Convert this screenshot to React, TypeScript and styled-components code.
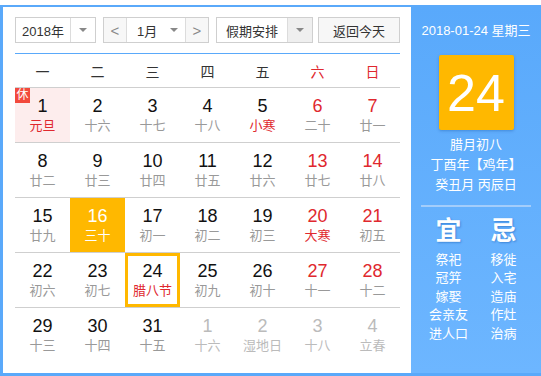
import { Fragment } from "react";
import styled, { createGlobalStyle } from "styled-components";

const GlobalStyle = createGlobalStyle`
  body {
    margin: 0;
    background: #fff;
    font-family: "Liberation Sans", Arial, "Noto Sans CJK SC", sans-serif;
  }
`;

const Frame = styled.div`
  display: flex;
  margin-top: 5px;
  width: 541px;
  height: 371px;
  box-sizing: border-box;
  border: 2px solid #5aa9fa;
  border-left-width: 3px;
  border-right: 0;
  border-bottom-width: 3px;
`;

const Main = styled.div`
  width: 408px;
  box-sizing: border-box;
  padding: 10px 11px 0 12px;
`;

const Toolbar = styled.div`
  display: flex;
  align-items: center;
  height: 26px;
`;

const SelectBox = styled.div<{ w: number; ml?: number }>`
  display: flex;
  width: ${({ w }) => w}px;
  height: 26px;
  margin-left: ${({ ml }) => ml || 0}px;
  box-sizing: border-box;
  border: 1px solid #cfcfcf;
  font-size: 13px;
  color: #333;
`;

const SelectText = styled.div`
  flex: 1;
  display: flex;
  align-items: center;
  justify-content: center;
`;

const Caret = styled.div<{ shaded?: boolean }>`
  width: 24px;
  border-left: 1px solid #dcdcdc;
  background: ${({ shaded }) => (shaded ? "#efefef" : "#fff")};
  display: flex;
  align-items: center;
  justify-content: center;
  &::after {
    content: "";
    border-left: 4px solid transparent;
    border-right: 4px solid transparent;
    border-top: 4px solid #888;
  }
`;

const NavButton = styled.div<{ side: "l" | "r" }>`
  width: 22px;
  display: flex;
  align-items: center;
  justify-content: center;
  background: #f7f7f7;
  color: #888;
  font-size: 15px;
  ${({ side }) => (side === "l" ? "border-right" : "border-left")}: 1px solid #dcdcdc;
`;

const MonthText = styled.div`
  flex: 1;
  display: flex;
  align-items: center;
  padding-left: 10px;
`;

const MonthCaret = styled.div`
  width: 22px;
  display: flex;
  align-items: center;
  justify-content: center;
  &::after {
    content: "";
    border-left: 4px solid transparent;
    border-right: 4px solid transparent;
    border-top: 4px solid #888;
  }
`;

const TodayButton = styled.div`
  margin-left: auto;
  width: 82px;
  height: 26px;
  box-sizing: border-box;
  border: 1px solid #cfcfcf;
  background: #f7f7f7;
  font-size: 13px;
  color: #333;
  display: flex;
  align-items: center;
  justify-content: center;
`;

const Grid = styled.div`
  margin-top: 10px;
  border-top: 1px solid #5aa9fa;
  display: grid;
  grid-template-columns: repeat(7, 55px);
`;

const WeekHead = styled.div<{ weekend?: boolean }>`
  height: 33px;
  display: flex;
  align-items: center;
  justify-content: center;
  font-size: 14px;
  color: ${({ weekend }) => (weekend ? "#e0282e" : "#333")};
  border-bottom: 1px solid #cfcfcf;
`;

const Cell = styled.div<{ bg: string; today?: boolean }>`
  position: relative;
  height: 54px;
  box-sizing: border-box;
  display: flex;
  flex-direction: column;
  align-items: center;
  justify-content: center;
  background: ${({ bg }) => bg};
  ${({ today }) => (today ? "border: 3px solid #ffb800;" : "")}
`;

const RowLine = styled.div`
  grid-column: 1 / -1;
  height: 1px;
  background: #cfcfcf;
`;

const DayNum = styled.div<{ color: string }>`
  font-size: 18px;
  line-height: 22px;
  color: ${({ color }) => color};
`;

const Lunar = styled.div<{ color: string }>`
  font-size: 13px;
  line-height: 18px;
  color: ${({ color }) => color};
`;

const RestBadge = styled.div`
  position: absolute;
  left: 0;
  top: 0;
  width: 15px;
  height: 15px;
  background: #f2493c;
  color: #fff;
  font-size: 12px;
  line-height: 15px;
  text-align: center;
`;

const Side = styled.div`
  flex: 1;
  background: linear-gradient(#59a9fb, #6db6ff);
  color: #fff;
  display: flex;
  flex-direction: column;
  align-items: center;
  padding: 15px 10px 0;
`;

const DateLine = styled.div`
  font-size: 13px;
  line-height: 18px;
`;

const BigDay = styled.div`
  margin-top: 15px;
  width: 75px;
  height: 75px;
  border-radius: 2px;
  background: #ffb800;
  box-shadow: 0 1px 3px rgba(0, 60, 140, 0.3);
  display: flex;
  align-items: center;
  justify-content: center;
  font-size: 52px;
  color: #fff;
`;

const LunarInfo = styled.div`
  margin-top: 5px;
  font-size: 13px;
  line-height: 20px;
  text-align: center;
`;

const Divider = styled.div`
  margin-top: 10px;
  width: 110px;
  height: 2px;
  background: #a3cdfb;
`;

const Columns = styled.div`
  margin-top: 9px;
  display: grid;
  grid-template-columns: 55px 55px;
`;

const Column = styled.div`
  display: flex;
  flex-direction: column;
  align-items: center;
`;

const BigChar = styled.div`
  font-size: 26px;
  line-height: 30px;
  font-weight: bold;
  text-shadow: 1px 1px 2px rgba(0, 70, 160, 0.4);
`;

const ItemList = styled.div`
  margin-top: 5px;
  font-size: 13px;
  line-height: 18.4px;
  text-align: center;
`;

type Day = {
  n: number;
  l: string;
  redNum?: boolean;
  redLunar?: boolean;
  other?: boolean;
  holiday?: boolean;
  selected?: boolean;
  today?: boolean;
};

const rows: Day[][] = [
  [
    { n: 1, l: "元旦", redLunar: true, holiday: true },
    { n: 2, l: "十六" },
    { n: 3, l: "十七" },
    { n: 4, l: "十八" },
    { n: 5, l: "小寒", redLunar: true },
    { n: 6, l: "二十", redNum: true },
    { n: 7, l: "廿一", redNum: true },
  ],
  [
    { n: 8, l: "廿二" },
    { n: 9, l: "廿三" },
    { n: 10, l: "廿四" },
    { n: 11, l: "廿五" },
    { n: 12, l: "廿六" },
    { n: 13, l: "廿七", redNum: true },
    { n: 14, l: "廿八", redNum: true },
  ],
  [
    { n: 15, l: "廿九" },
    { n: 16, l: "三十", selected: true },
    { n: 17, l: "初一" },
    { n: 18, l: "初二" },
    { n: 19, l: "初三" },
    { n: 20, l: "大寒", redNum: true, redLunar: true },
    { n: 21, l: "初五", redNum: true },
  ],
  [
    { n: 22, l: "初六" },
    { n: 23, l: "初七" },
    { n: 24, l: "腊八节", redLunar: true, today: true },
    { n: 25, l: "初九" },
    { n: 26, l: "初十" },
    { n: 27, l: "十一", redNum: true },
    { n: 28, l: "十二", redNum: true },
  ],
  [
    { n: 29, l: "十三" },
    { n: 30, l: "十四" },
    { n: 31, l: "十五" },
    { n: 1, l: "十六", other: true },
    { n: 2, l: "湿地日", other: true },
    { n: 3, l: "十八", other: true },
    { n: 4, l: "立春", other: true },
  ],
];

const weekNames = ["一", "二", "三", "四", "五", "六", "日"];

function DayCell({ d }: { d: Day }) {
  let num = d.redNum ? "#e0282e" : "#111";
  let lunar = d.redLunar ? "#e0282e" : "#999";
  let bg = "transparent";
  if (d.other) {
    num = "#bbb";
    lunar = "#bbb";
  }
  if (d.holiday) bg = "#fdeded";
  if (d.selected) {
    bg = "#ffb800";
    num = "#fff";
    lunar = "#fff";
  }
  return (
    <Cell bg={bg} today={d.today}>
      {d.holiday && <RestBadge>休</RestBadge>}
      <DayNum color={num}>{d.n}</DayNum>
      <Lunar color={lunar}>{d.l}</Lunar>
    </Cell>
  );
}

export default function App() {
  return (
    <>
      <GlobalStyle />
      <Frame>
        <Main>
          <Toolbar>
            <SelectBox w={81}>
              <SelectText>2018年</SelectText>
              <Caret />
            </SelectBox>
            <SelectBox w={106} ml={7}>
              <NavButton side="l">&lt;</NavButton>
              <MonthText>1月</MonthText>
              <MonthCaret />
              <NavButton side="r">&gt;</NavButton>
            </SelectBox>
            <SelectBox w={97} ml={7}>
              <SelectText>假期安排</SelectText>
              <Caret shaded />
            </SelectBox>
            <TodayButton>返回今天</TodayButton>
          </Toolbar>
          <Grid>
            {weekNames.map((w, i) => (
              <WeekHead key={w} weekend={i >= 5}>
                {w}
              </WeekHead>
            ))}
            {rows.map((r, ri) => (
              <Fragment key={ri}>
                {ri > 0 && <RowLine />}
                {r.map((d, di) => (
                  <DayCell key={di} d={d} />
                ))}
              </Fragment>
            ))}
          </Grid>
        </Main>
        <Side>
          <DateLine>2018-01-24 星期三</DateLine>
          <BigDay>24</BigDay>
          <LunarInfo>
            <div>腊月初八</div>
            <div>丁酉年【鸡年】</div>
            <div>癸丑月 丙辰日</div>
          </LunarInfo>
          <Divider />
          <Columns>
            <Column>
              <BigChar>宜</BigChar>
              <ItemList>
                <div>祭祀</div>
                <div>冠笄</div>
                <div>嫁娶</div>
                <div>会亲友</div>
                <div>进人口</div>
              </ItemList>
            </Column>
            <Column>
              <BigChar>忌</BigChar>
              <ItemList>
                <div>移徙</div>
                <div>入宅</div>
                <div>造庙</div>
                <div>作灶</div>
                <div>治病</div>
              </ItemList>
            </Column>
          </Columns>
        </Side>
      </Frame>
    </>
  );
}
